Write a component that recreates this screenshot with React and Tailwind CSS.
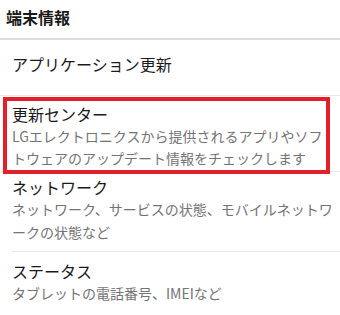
const font = { fontFamily: '"Noto Sans CJK JP", "Noto Sans", sans-serif' };

function Item({ title, lines, className = "" }) {
    return (
        <div className={className}>
            <div className="text-[16px] leading-[22px] text-[#1a1a1a]">{title}</div>
            {lines.map((line) => (
                <div key={line} className="text-[14px] leading-[23px] text-[#747474] whitespace-nowrap">{line}</div>
            ))}
        </div>
    );
}

export default function App() {
    return (
        <div className="w-[340px] h-[315px] bg-white overflow-hidden" style={font}>
            <div className="h-[40px] pl-[6px] pt-[6px] border-b-2 border-[#dcdcdc]">
                <h1 className="text-[16px] leading-[22px] font-bold text-[#1a1a1a]">端末情報</h1>
            </div>

            <div className="h-[56px] pl-3 pt-[13px] border-b border-[#e8e8e8]">
                <div className="text-[16px] leading-[22px] text-[#1a1a1a]">アプリケーション更新</div>
            </div>

            <div className="relative h-[76px] border-b border-[#e8e8e8]">
                <div className="pl-3 pt-[7px]">
                    <div className="text-[16px] leading-[22px] text-[#1a1a1a]">更新センター</div>
                    <div className="text-[14px] leading-[22px] text-[#747474] whitespace-nowrap">LGエレクトロニクスから提供されるアプリやソフ</div>
                    <div className="text-[14px] leading-[22px] text-[#747474] whitespace-nowrap">トウェアのアップデート情報をチェックします</div>
                </div>
                {/* highlight frame */}
                <div className="absolute left-[3px] top-[1px] w-[327px] h-[77px] border-4 border-[#e3202a]" />
            </div>

            <Item
                className="h-[79px] pl-3 pt-[4px]"
                title="ネットワーク"
                lines={["ネットワーク、サービスの状態、モバイルネットワ", "ークの状態など"]}
            />
            <div className="ml-3 h-px bg-[#e8e8e8]" />

            <Item
                className="pl-3 pt-[8px]"
                title="ステータス"
                lines={["タブレットの電話番号、IMEIなど"]}
            />
        </div>
    );
}
